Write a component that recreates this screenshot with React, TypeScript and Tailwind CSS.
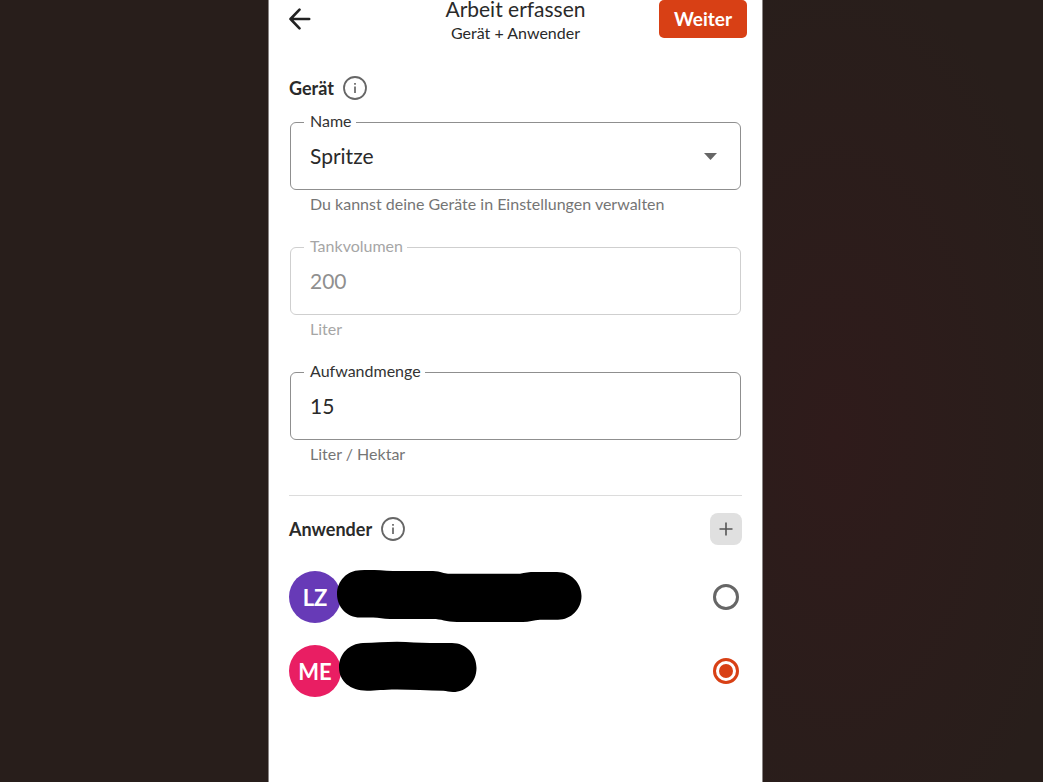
import React from 'react'
import clsx from 'clsx'

type Operator = {
  id: string
  initials: string
  color: string
  width: number
  height: number
  mask: string
}

const operators: Operator[] = [
  {
    id: 'lz',
    initials: 'LZ',
    color: 'bg-[#673ab7]',
    width: 245,
    height: 56,
    mask: 'M23 1.2C32 .6 43 1 56 2H96C104 2.500 107 4.500 111 4.700H183C188 3.500 192 3 198 3H220C234 3 244.500 14 244.500 27S234 50.700 221 50.700H203C197 51 192 53 186 53H120C109 52.700 104 50 96 50H53C46 49.700 42 48.700 36 48.500H23C10 48.500 0 38 0 25S10 1.500 23 1.200Z'
  },
  {
    id: 'me',
    initials: 'ME',
    color: 'bg-[#e91e63]',
    width: 140,
    height: 60,
    mask: 'M26 2C38 1.500 48 .7 60 .7S82 2 93 2H115C129 2 139.500 13 139.500 27S129 51 116 51C112 51 110 49.700 106 49.700C91 49.700 75 48.500 60 48.500S40 49.700 30 49.700C13 49.700 2 40 2 26.500S12 2.500 26 2Z'
  }
]

function InfoButton({ label }: { label: string }) {
  return (
    <button type="button" aria-label={label} className="text-[#666]">
      <svg width="24" height="24" viewBox="0 0 24 24" fill="none" stroke="currentColor" strokeWidth="1.800">
        <circle cx="12" cy="12" r="11" />
        <path d="M12 10.500v6.500M12 7v1.800" strokeWidth="1.700" />
      </svg>
    </button>
  )
}

type FieldProps = {
  id: string
  label: string
  helper: string
  disabled?: boolean
  children: React.ReactNode
}

function Field({ id, label, helper, disabled, children }: FieldProps) {
  return (
    <div className="mx-px">
      <div
        className={clsx(
          'relative flex h-17 items-center rounded-md border',
          disabled ? 'border-[#cfcfcf]' : 'border-[#8f8f8f]'
        )}
      >
        <label
          htmlFor={id}
          className={clsx(
            'absolute -top-3 left-[13px] bg-white pr-1 pl-1.5 text-base leading-5',
            disabled ? 'text-[#a6a6a6]' : 'text-[#333]'
          )}
        >
          {label}
        </label>
        {children}
      </div>
      <p
        id={`${id}-helper`}
        className={clsx('pt-1 pl-5 text-base leading-5', disabled ? 'text-[#a6a6a6]' : 'text-[#757575]')}
      >
        {helper}
      </p>
    </div>
  )
}

export default function App() {
  const [rate, setRate] = React.useState('15')
  const [operator, setOperator] = React.useState('me')

  return (
    <div className="flex min-h-screen justify-center bg-[#281e1b] bg-[radial-gradient(ellipse_24%_60%_at_80%_56%,#2f1b1b_0%,#281e1b_100%)] pr-3 font-['Lato',sans-serif] text-[#2a2a2a]">
      <main className="w-full max-w-[495px] border-x border-[#8a8584] bg-white">
        {/* Header */}
        <header className="grid h-12 grid-cols-[1fr_auto_1fr] items-start px-[15px]">
          <button type="button" aria-label="Zurück" className="flex h-[38px] items-center px-[5px] text-[#222]">
            <svg width="22" height="22" viewBox="0 0 22 22" fill="none" stroke="currentColor" strokeWidth="2.600" strokeLinecap="round" strokeLinejoin="round">
              <path d="M20.200 11H1.500M10.500 1.700L1.500 11l9 9.300" />
            </svg>
          </button>
          <div className="text-center">
            <h1 className="text-[21px] leading-[18px]">Arbeit erfassen</h1>
            <p className="text-base leading-[30px]">Gerät + Anwender</p>
          </div>
          <button
            type="button"
            className="h-[38px] justify-self-end rounded-[5px] bg-[#d84015] px-[15px] text-[19px] font-bold text-white"
          >
            Weiter
          </button>
        </header>

        <form className="px-5 pt-7">
          {/* Device */}
          <section>
            <div className="flex h-6 items-center gap-[9px]">
              <h2 className="text-lg font-bold">Gerät</h2>
              <InfoButton label="Info zum Gerät" />
            </div>
            <div className="mt-[22px] space-y-[33px]">
              <Field id="device" label="Name" helper="Du kannst deine Geräte in Einstellungen verwalten">
                <select
                  id="device"
                  aria-describedby="device-helper"
                  className="h-full w-full appearance-none bg-transparent pr-12 pl-[19px] text-[21px] outline-none"
                >
                  <option>Spritze</option>
                </select>
                <svg width="13" height="7" viewBox="0 0 13 7" className="pointer-events-none absolute right-[23px] fill-[#666]">
                  <path d="M0 0h13L6.500 7z" />
                </svg>
              </Field>
              <Field id="tank" label="Tankvolumen" helper="Liter" disabled>
                <input
                  id="tank"
                  aria-describedby="tank-helper"
                  value="200"
                  disabled
                  className="h-full w-full bg-transparent px-[19px] pb-0.5 text-[21px] text-[#8f8f8f] outline-none"
                />
              </Field>
              <Field id="rate" label="Aufwandmenge" helper="Liter / Hektar">
                <input
                  id="rate"
                  aria-describedby="rate-helper"
                  value={rate}
                  onChange={(e) => setRate(e.target.value)}
                  className="h-full w-full bg-transparent px-[19px] pb-0.5 text-[21px] outline-none"
                />
              </Field>
            </div>
          </section>

          <hr className="mt-[31px] border-[#dcdcdc]" />

          {/* Operators */}
          <section className="pt-[17px]">
            <div className="flex h-8 items-center gap-[9px]">
              <h2 className="text-lg font-bold">Anwender</h2>
              <InfoButton label="Info zum Anwender" />
              <button
                type="button"
                aria-label="Anwender hinzufügen"
                className="ml-auto flex size-8 items-center justify-center rounded-lg bg-[#e0e0e0] text-[#555]"
              >
                <svg width="14" height="14" viewBox="0 0 14 14" stroke="currentColor" strokeWidth="1.600">
                  <path d="M7 .5v13M.5 7h13" />
                </svg>
              </button>
            </div>
            <div className="mt-[26px] space-y-[22px]">
              {operators.map((op) => (
                <label key={op.id} className="flex h-13 items-center">
                  <span
                    className={clsx(
                      'flex size-13 shrink-0 items-center justify-center rounded-full text-[22px] font-bold text-white',
                      op.color
                    )}
                  >
                    {op.initials}
                  </span>
                  <svg
                    width={op.width}
                    height={op.height}
                    viewBox={`0 0 ${op.width} ${op.height}`}
                    className="-ml-1 shrink-0"
                    aria-hidden="true"
                  >
                    <path d={op.mask} />
                  </svg>
                  <input
                    type="radio"
                    name="operator"
                    aria-label={op.initials}
                    checked={operator === op.id}
                    onChange={() => setOperator(op.id)}
                    className="mr-[3px] ml-auto flex size-[26px] appearance-none items-center justify-center rounded-full border-[3px] border-[#666] before:size-[14px] before:rounded-full checked:border-[#d84015] checked:before:bg-[#d84015]"
                  />
                </label>
              ))}
            </div>
          </section>
        </form>
      </main>
    </div>
  )
}
